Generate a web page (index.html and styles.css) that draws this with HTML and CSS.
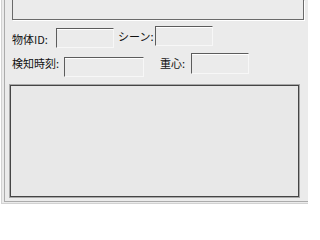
FILE: index.html
```html
<!DOCTYPE html>
<html lang="ja">
<head>
<meta charset="utf-8">
<link rel="stylesheet" href="styles.css">
</head>
<body>
<div class="frame">
  <div class="inner">
    <div class="top-box"></div>
    <div class="row row1">
      <span class="label l1">物体ID:</span>
      <div class="field f1"></div>
      <span class="label l2">シーン:</span>
      <div class="field f2"></div>
    </div>
    <div class="row row2">
      <span class="label l3">検知時刻:</span>
      <div class="field f3"></div>
      <span class="label l4">重心:</span>
      <div class="field f4"></div>
    </div>
    <div class="bottom-box"></div>
  </div>
</div>
</body>
</html>
```
FILE: styles.css
```css
html, body {
  margin: 0;
  padding: 0;
  background: #ffffff;
}
body {
  width: 308px;
  height: 216px;
  overflow: hidden;
  font-family: "Noto Sans CJK JP", "Liberation Sans", sans-serif;
  font-size: 11px;
  color: #111;
}
.frame {
  margin-left: 1px;
  border-left: 1px solid #d2d2d2;
  border-bottom: 1px solid #d2d2d2;
  padding-bottom: 1px;
  background: #ebebeb;
}
.inner {
  margin-left: 2px;
  height: 201px;
  border-left: 1px solid #ababab;
  border-bottom: 1px solid #ababab;
  display: flex;
  flex-direction: column;
}
.top-box {
  margin-left: 7px;
  width: 290px;
  height: 19px;
  border: 1px solid #6a6a6a;
  border-top: none;
  box-shadow: 1px 1px 0 #ffffff;
  flex: none;
}
.row {
  display: flex;
  align-items: flex-start;
  margin-left: 7px;
  flex: none;
}
.row1 { margin-top: 6px; }
.row2 { margin-top: 5px; }
.label {
  line-height: 14px;
  white-space: nowrap;
  flex: none;
}
.field {
  box-sizing: border-box;
  background: #ebebeb;
  border-top: 1px solid #5c5c5c;
  border-left: 1px solid #5c5c5c;
  border-right: 1px solid #f7f7f7;
  border-bottom: 1px solid #f7f7f7;
  box-shadow: inset 0 1px 0 #ffffff;
  flex: none;
}
.l1 { width: 44px; margin-top: 6px; }
.f1 { width: 58px; height: 20px; margin-top: 2px; }
.l2 { width: 37px; margin-left: 4px; margin-top: 3px; }
.f2 { width: 58px; height: 20px; }
.l3 { width: 52px; margin-top: 3px; }
.f3 { width: 80px; height: 20px; margin-top: 4px; }
.l4 { width: 31px; margin-left: 16px; margin-top: 3px; }
.f4 { width: 58px; height: 21px; }
.bottom-box {
  box-sizing: border-box;
  margin-top: 7px;
  margin-left: 4px;
  width: 291px;
  height: 114px;
  border: 1px solid #a8a8a8;
  box-shadow: inset 0 0 0 1px #454545;
  background: #e8e8e8;
  flex: none;
}
```
